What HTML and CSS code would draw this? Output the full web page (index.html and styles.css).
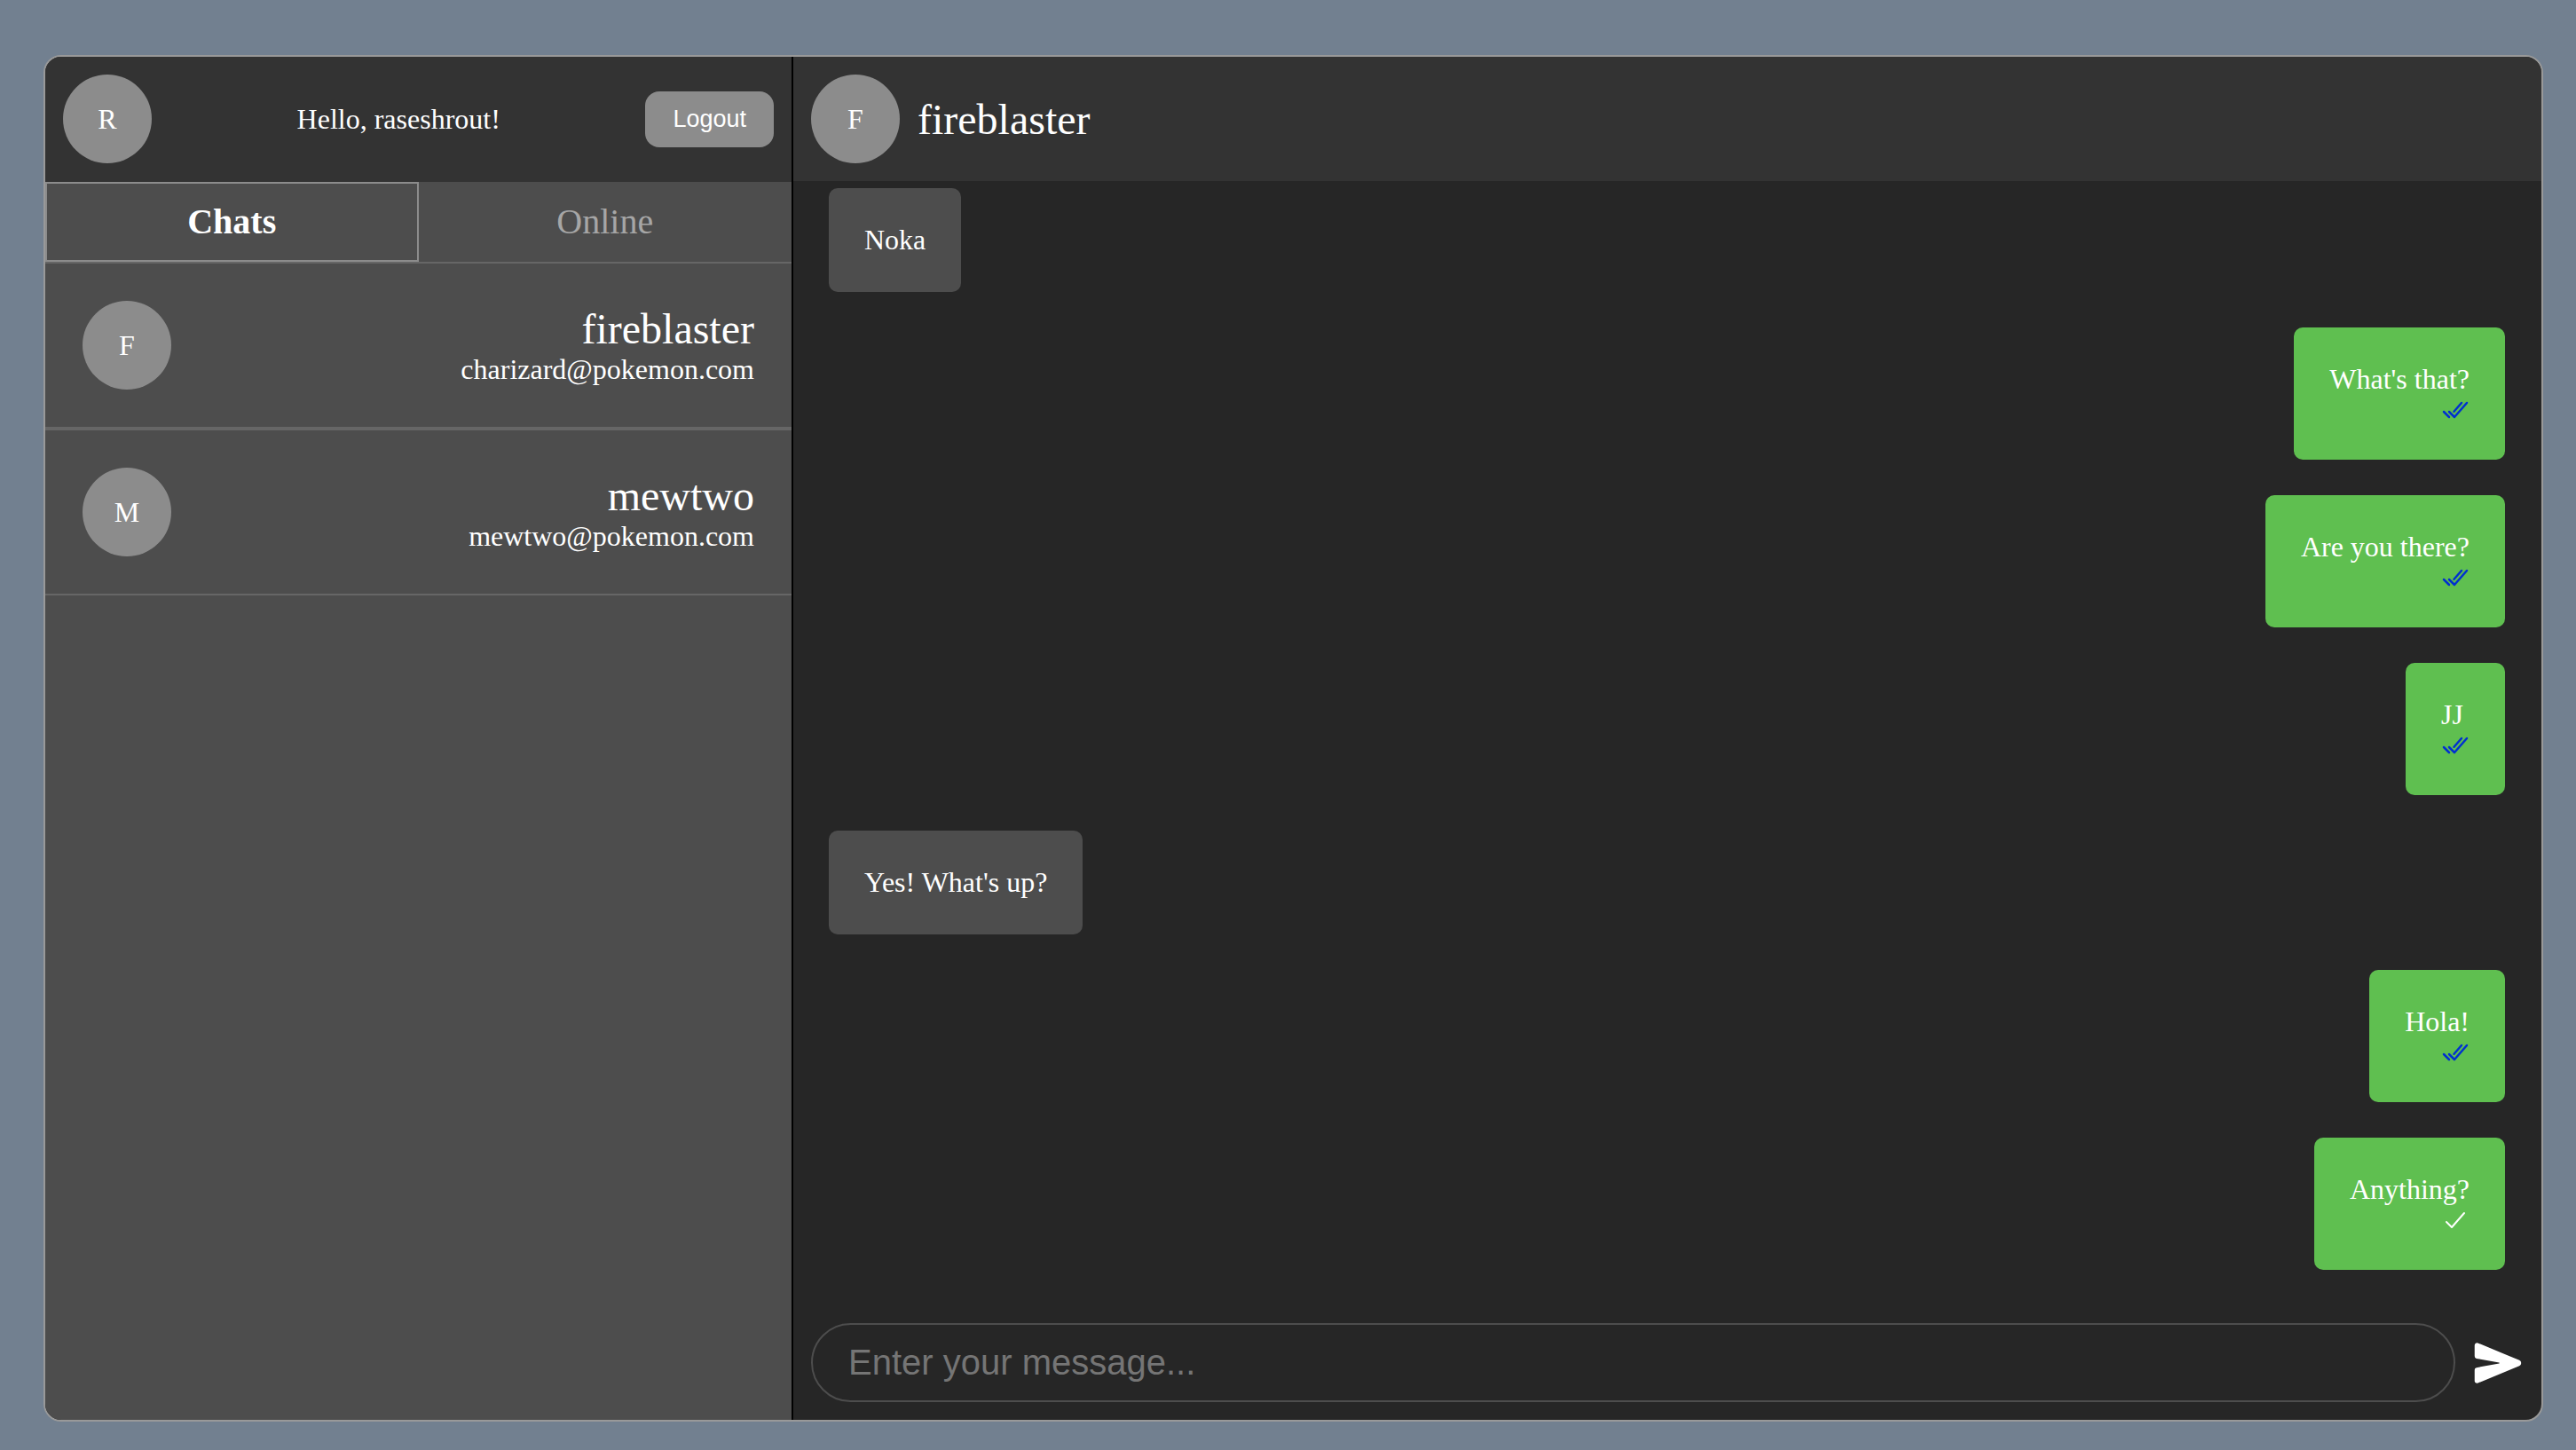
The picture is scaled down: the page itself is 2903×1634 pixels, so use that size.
FILE: index.html
```html
<!DOCTYPE html>
<html lang="en">
<head>
<meta charset="utf-8">
<meta name="viewport" content="width=device-width, initial-scale=1">
<title>Chat</title>
<link rel="stylesheet" href="styles.css">
</head>
<body>
<svg class="sprite" aria-hidden="true">
  <symbol id="read" viewBox="0 0 512 512"><path d="M464 128L240 384l-96-96M144 384l-96-96M368 128L232 284"/></symbol>
  <symbol id="sent" viewBox="0 0 512 512"><path d="M416 128L192 384l-96-96"/></symbol>
</svg>
<main class="app">
  <aside class="sidebar">
    <header class="profile">
      <span class="avatar">R</span>
      <span>Hello, raseshrout!</span>
      <button class="logout" type="button">Logout</button>
    </header>
    <nav class="tabs">
      <button class="tab tab-active" type="button">Chats</button>
      <button class="tab" type="button">Online</button>
    </nav>
    <ul class="contacts">
      <li class="contact">
        <span class="avatar">F</span>
        <div class="contact-text">
          <div class="name">fireblaster</div>
          <div>charizard@pokemon.com</div>
        </div>
      </li>
      <li class="contact">
        <span class="avatar">M</span>
        <div class="contact-text">
          <div class="name">mewtwo</div>
          <div>mewtwo@pokemon.com</div>
        </div>
      </li>
    </ul>
  </aside>
  <section class="chat">
    <header class="chat-header">
      <span class="avatar">F</span>
      <span class="name">fireblaster</span>
    </header>
    <div class="messages">
      <div class="message">Noka</div>
      <div class="message mine">What's that?<svg class="tick tick-read"><use href="#read"/></svg></div>
      <div class="message mine">Are you there?<svg class="tick tick-read"><use href="#read"/></svg></div>
      <div class="message mine">JJ<svg class="tick tick-read"><use href="#read"/></svg></div>
      <div class="message">Yes! What's up?</div>
      <div class="message mine">Hola!<svg class="tick tick-read"><use href="#read"/></svg></div>
      <div class="message mine">Anything?<svg class="tick"><use href="#sent"/></svg></div>
    </div>
    <form class="composer">
      <input class="entry" type="text" placeholder="Enter your message..." aria-label="Message">
      <button class="send" type="button" aria-label="Send">
        <svg class="send-icon" viewBox="0 0 512 512"><path d="M476.59 227.05l-.16-.07L49.35 49.84A23.56 23.56 0 0027.14 52 24.65 24.65 0 0016 72.59v113.29a24 24 0 0019.52 23.57l232.93 43.07a4 4 0 010 7.86L35.53 303.45A24 24 0 0016 327v113.31A23.57 23.57 0 0026.59 460a23.94 23.94 0 0013.22 4 24.55 24.55 0 009.52-1.93L476.4 285.94l.19-.09a32 32 0 000-58.8z"/></svg>
      </button>
    </form>
  </section>
</main>
</body>
</html>
```
FILE: styles.css
```css
* {
  box-sizing: border-box;
}

body {
  margin: 0;
  min-height: 100vh;
  display: flex;
  padding: 62px 37px 32px 49px;
  background: #728090;
  color: #fff;
  font: 32px/37px "Liberation Serif", "Times New Roman", serif;
}

button,
input {
  margin: 0;
  color: inherit;
  font-family: "Liberation Sans", Arial, sans-serif;
}

.sprite {
  display: none;
}

.app {
  flex: 1;
  min-width: 0;
  display: flex;
  overflow: hidden;
  border: 2px solid #999;
  border-radius: 20px;
  background: #262626;
}

.sidebar {
  flex: 0 0 843px;
  border-right: 2px solid #000;
  background: #4d4d4d;
}

.profile,
.chat-header {
  display: flex;
  align-items: center;
  padding: 20px;
  background: #333;
}

.profile {
  justify-content: space-between;
  padding-bottom: 21px;
}

.chat-header {
  gap: 20px;
}

.avatar {
  flex: none;
  display: flex;
  align-items: center;
  justify-content: center;
  width: 100px;
  height: 100px;
  border-radius: 50%;
  background: #8c8c8c;
}

.name {
  font-size: 48px;
  line-height: 55px;
}

.logout {
  padding: 16px 31px;
  border: 0;
  border-radius: 16px;
  background: #8c8c8c;
  font-size: 27px;
  line-height: 31px;
}

.tabs {
  display: grid;
  grid-template-columns: 1fr 1fr;
}

.tab {
  padding: 20px;
  border: 2px solid transparent;
  background: none;
  color: #a6a6a6;
  font-family: inherit;
  font-size: 40px;
  line-height: 46px;
}

.tab-active {
  border-color: #8c8c8c;
  color: #fff;
  font-weight: bold;
}

.contacts {
  margin: 0;
  padding: 0;
  list-style: none;
}

.contact {
  display: flex;
  align-items: center;
  justify-content: space-between;
  padding: 42px;
  border: solid #666;
  border-width: 2px 0;
}

.contact-text {
  text-align: right;
}

.chat {
  flex: 1;
  min-width: 0;
  display: flex;
  flex-direction: column;
}

.messages {
  flex: 1;
  display: flex;
  flex-direction: column;
  align-items: flex-start;
  justify-content: flex-end;
  gap: 40px;
  padding: 0 41px 60px 40px;
}

.message {
  padding: 40px;
  border-radius: 10px;
  background: #4d4d4d;
}

.mine {
  align-self: flex-end;
  background: #5fbf50;
}

.tick {
  display: block;
  width: 32px;
  height: 32px;
  margin-left: auto;
  fill: none;
  stroke: #fff;
  stroke-width: 32;
  stroke-linecap: round;
  stroke-linejoin: round;
}

.tick-read {
  stroke: #0030d0;
  stroke-width: 40;
}

.composer {
  display: flex;
  align-items: center;
  gap: 20px;
  padding: 0 21px 20px 20px;
}

.entry {
  flex: 1;
  min-width: 0;
  height: 89px;
  padding: 0 40px;
  border: 2px solid #4d4d4d;
  border-radius: 45px;
  background: none;
  font-size: 40px;
}

.entry::placeholder {
  color: #757575;
}

.send {
  padding: 0;
  border: 0;
  background: none;
}

.send-icon {
  display: block;
  width: 56px;
  height: 56px;
  fill: #fff;
}
```
